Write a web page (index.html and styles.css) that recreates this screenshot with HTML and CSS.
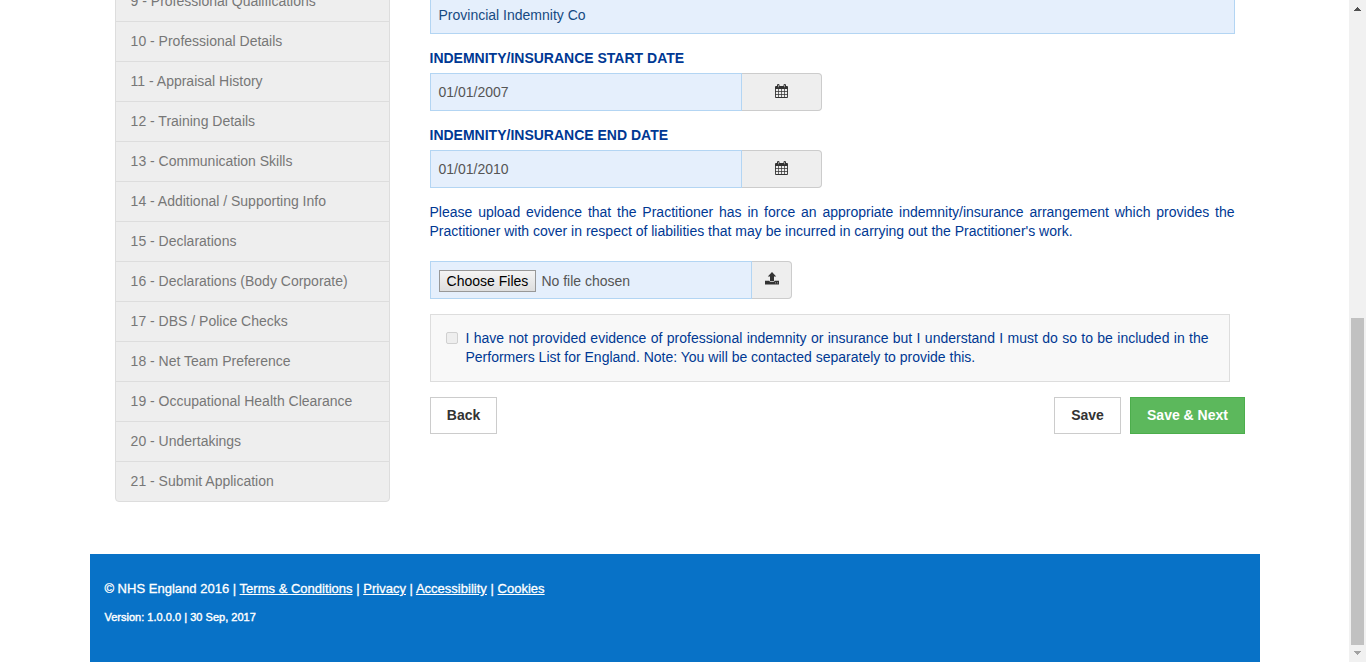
FILE: index.html
```html
<!DOCTYPE html>
<html lang="en">
<head>
<meta charset="utf-8">
<title>Performers List - Indemnity</title>
<link rel="stylesheet" href="styles.css">
</head>
<body>
<svg width="0" height="0" class="symbols">
  <symbol id="calendar" viewBox="0 0 14 15">
    <path fill="#333" fill-rule="evenodd" d="M1 2H2V1Q2 0 3.25 0T4.5 1V2H8.5V1Q8.5 0 9.75 0T11 1V2H12Q13 2 13 3V13Q13 14 12 14H1Q0 14 0 13V3Q0 2 1 2ZM.9 4.9V7.2H3.1V4.9ZM3.8 4.9V7.2H6.1V4.9ZM6.8 4.9V7.2H9.1V4.9ZM9.8 4.9V7.2H12.1V4.9ZM.9 7.9V10.2H3.1V7.9ZM3.8 7.9V10.2H6.1V7.9ZM6.8 7.9V10.2H9.1V7.9ZM9.8 7.9V10.2H12.1V7.9ZM.9 10.9V13.1H3.1V10.9ZM3.8 10.9V13.1H6.1V10.9ZM6.8 10.9V13.1H9.1V10.9ZM9.8 10.9V13.1H12.1V10.9ZM3 1V3.2H3.5V1ZM9.5 1V3.2H10V1Z"/>
  </symbol>
  <symbol id="upload" viewBox="0 0 14 13">
    <path fill="#333" fill-rule="evenodd" d="M7 0L11.2 4.4H9V9H5V4.4H2.8ZM0 8.7H4.3Q4.6 9.8 5.5 9.8H8.5Q9.4 9.8 9.7 8.7H14V12.5H0ZM10 10.6V11.3H10.8V10.6ZM12 10.6V11.3H12.8V10.6Z"/>
  </symbol>
</svg>
<div class="viewport">
  <div class="page">
    <div class="columns">
      <nav class="steps">
        <a class="step">9 - Professional Qualifications</a>
        <a class="step">10 - Professional Details</a>
        <a class="step">11 - Appraisal History</a>
        <a class="step">12 - Training Details</a>
        <a class="step">13 - Communication Skills</a>
        <a class="step">14 - Additional / Supporting Info</a>
        <a class="step">15 - Declarations</a>
        <a class="step">16 - Declarations (Body Corporate)</a>
        <a class="step">17 - DBS / Police Checks</a>
        <a class="step">18 - Net Team Preference</a>
        <a class="step">19 - Occupational Health Clearance</a>
        <a class="step">20 - Undertakings</a>
        <a class="step">21 - Submit Application</a>
      </nav>
      <main class="form">
        <div class="field company">Provincial Indemnity Co</div>
        <div class="label">INDEMNITY/INSURANCE START DATE</div>
        <div class="group">
          <div class="field date">01/01/2007</div>
          <div class="addon wide"><svg class="calendar" width="14" height="15"><use href="#calendar"/></svg></div>
        </div>
        <div class="label">INDEMNITY/INSURANCE END DATE</div>
        <div class="group">
          <div class="field date">01/01/2010</div>
          <div class="addon wide"><svg class="calendar" width="14" height="15"><use href="#calendar"/></svg></div>
        </div>
        <p class="hint">Please upload evidence that the Practitioner has in force an appropriate indemnity/insurance arrangement which provides the Practitioner with cover in respect of liabilities that may be incurred in carrying out the Practitioner's work.</p>
        <div class="group">
          <div class="field file"><span class="choose">Choose Files</span><span>No file chosen</span></div>
          <div class="addon"><svg class="upload" width="14" height="13"><use href="#upload"/></svg></div>
        </div>
        <div class="well">
          <span class="check"></span>
          <p class="consent">I have not provided evidence of professional indemnity or insurance but I understand I must do so to be included in the Performers List for England. Note: You will be contacted separately to provide this.</p>
        </div>
        <div class="actions">
          <div class="btn back">Back</div>
          <div class="btn save">Save</div>
          <div class="btn next">Save &amp; Next</div>
        </div>
      </main>
    </div>
    <footer class="footer">
      <div class="legal">© NHS England 2016 | <u>Terms &amp; Conditions</u> | <u>Privacy</u> | <u>Accessibility</u> | <u>Cookies</u></div>
      <div class="version">Version: 1.0.0.0 | 30 Sep, 2017</div>
    </footer>
  </div>
  <div class="scrollbar">
    <svg width="17" height="17" shape-rendering="crispEdges"><path fill="#505050" d="M8 7h1v1h1v1h1v1h1v1H5v-1h1V9h1V8h1z"/></svg>
    <div class="thumb"></div>
    <svg width="17" height="17" shape-rendering="crispEdges"><path fill="#a3a3a3" d="M5 6h7v1h-1v1h-1v1H9v1H8V9H7V8H6V7H5z"/></svg>
  </div>
</div>
</body>
</html>
```
FILE: styles.css
```css
* { box-sizing: border-box; }
body {
  margin: 0;
  overflow: hidden;
  background: #fff;
  font: 14px/20px "Liberation Sans", Arial, sans-serif;
}
p { margin: 0; }
.symbols { display: none; }
.viewport { display: flex; height: 662px; overflow: hidden; }
.page { width: 1349px; height: 662px; padding-left: 90px; overflow: hidden; }
.columns { display: flex; height: 554px; padding-left: 25px; }

.steps { width: 275px; margin-top: -19px; flex: none; }
.step {
  display: block;
  height: 41px;
  margin-bottom: -1px;
  padding: 9px 14.6px;
  border: 1px solid #ddd;
  background: #eee;
  color: #777;
}
.step:last-child { border-radius: 0 0 4px 4px; }

.form { width: 815px; margin: -4px 0 0 40px; }
.field {
  display: flex;
  align-items: center;
  height: 38px;
  padding: 0 7.5px;
  border: 1px solid #b3d5f3;
  background: #e5effc;
  color: #555;
}
.company { width: 805px; color: #164a82; }
.date { width: 312px; }
.file { width: 322px; padding: 2px 8px 0; }
.label {
  height: 39px;
  padding-top: 14px;
  color: #003893;
  font-weight: bold;
  text-indent: -0.5px;
}
.group { display: flex; height: 38px; }
.addon {
  display: flex;
  justify-content: center;
  width: 40px;
  padding-top: 10px;
  border: 1px solid #ccc;
  border-left: 0;
  border-radius: 0 4px 4px 0;
  background: #eee;
}
.addon.wide { width: 80px; }
.hint {
  width: 805px;
  margin: 15px 0 20px -0.5px;
  color: #003893;
  line-height: 19px;
  text-align: justify;
}
.choose {
  width: 97px;
  height: 22px;
  margin-right: 5.4px;
  padding-left: 6.6px;
  border: 1px solid #989898;
  background: linear-gradient(#f4f4f4, #dedede);
  color: #000;
  white-space: nowrap;
}
.well {
  display: flex;
  width: 800px;
  height: 68px;
  margin-top: 15px;
  padding: 14px 20px 0 15px;
  border: 1px solid #ddd;
  background: #f8f8f8;
  color: #003893;
  line-height: 19px;
}
.check {
  flex: none;
  width: 12px;
  height: 12px;
  margin: 3px 7.5px 0 0;
  border: 1px solid #d0d0d0;
  border-radius: 2px;
  background: #eee;
}
.consent { width: 743px; text-align: justify; }
.actions { display: flex; margin-top: 15px; }
.btn {
  height: 37px;
  border: 1px solid #ccc;
  color: #333;
  font-weight: bold;
  line-height: 35px;
  text-align: center;
}
.back, .save { width: 67px; }
.save { margin-left: auto; margin-right: 9px; }
.next { width: 115px; border-color: #4cae4c; background: #5cb85c; color: #fff; }

.footer {
  width: 1170px;
  height: 108px;
  padding: 25px 14.4px;
  background: #0872c7;
  color: #fff;
}
.legal {
  font-size: 13px;
  letter-spacing: 0.015px;
  -webkit-text-stroke: 0.3px #fff;
}
.version {
  margin-top: 8px;
  font-size: 11px;
  letter-spacing: 0.02px;
  -webkit-text-stroke: 0.4px #fff;
}

.scrollbar {
  display: flex;
  flex-direction: column;
  width: 17px;
  background: #f1f1f1;
}
.thumb { width: 13px; height: 327px; margin: auto 2px 0; background: #c1c1c1; }
```
